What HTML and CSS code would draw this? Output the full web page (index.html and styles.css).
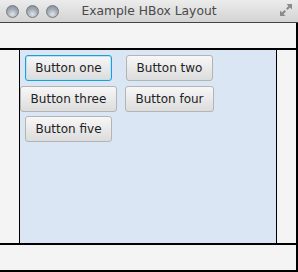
FILE: index.html
```html
<!DOCTYPE html>
<html>
<head>
<meta charset="utf-8">
<link rel="stylesheet" href="styles.css">
</head>
<body>
<div class="window">
  <div class="titlebar">
    <div class="lights">
      <span class="light"></span>
      <span class="light"></span>
      <span class="light"></span>
    </div>
    <div class="title">Example HBox Layout</div>
    <svg class="fullscreen" width="14" height="14" viewBox="0 0 14 14">
      <polygon points="13,1 13,6.5 11,4.5 8.5,7 7,5.5 9.5,3 7.5,1" fill="#8a8a8a"/>
      <polygon points="1,13 1,7.5 3,9.5 5.5,7 7,8.5 4.5,11 6.5,13" fill="#8a8a8a"/>
    </svg>
  </div>
  <div class="content">
    <div class="band">
      <div class="pane">
        <div class="tiles">
          <button class="btn focused">Button one</button>
          <button class="btn">Button two</button>
          <button class="btn">Button three</button>
          <button class="btn">Button four</button>
          <button class="btn">Button five</button>
        </div>
      </div>
    </div>
  </div>
</div>
</body>
</html>
```

FILE: styles.css
```css
html, body {
  margin: 0;
  padding: 0;
  background: #f4f4f4;
}
.window {
  width: 298px;
  height: 272px;
  display: flex;
  flex-direction: column;
  overflow: hidden;
}
.titlebar {
  height: 22px;
  flex: none;
  border-bottom: 1px solid #444;
  background: linear-gradient(#ececec, #d3d3d3);
  display: flex;
  align-items: center;
  position: relative;
}
.lights {
  display: flex;
  gap: 7px;
  padding-left: 6px;
}
.light {
  width: 11px;
  height: 11px;
  border-radius: 50%;
  border: 1px solid #737b84;
  background: radial-gradient(circle at 50% 75%, #e2e6ea 0%, #aab2bb 45%, #7b8590 100%);
}
.title {
  position: absolute;
  left: 0;
  right: 0;
  top: 4px;
  text-align: center;
  font-family: "DejaVu Sans", sans-serif;
  font-size: 12.3px;
  color: #4a4a4a;
}
.fullscreen {
  position: absolute;
  right: 5px;
  top: 3px;
}
.content {
  flex: 1;
  border-right: 2px solid #000;
  border-bottom: 2px solid #000;
  padding-top: 25px;
  display: flex;
  flex-direction: column;
}
.band {
  border-top: 2px solid #000;
  border-bottom: 2px solid #000;
  height: 193px;
  display: flex;
}
.pane {
  margin-left: 19px;
  width: 256px;
  border-left: 1px solid #000;
  border-right: 1px solid #000;
  background: #dae6f3;
}
.tiles {
  display: grid;
  grid-template-columns: 97px 97px;
  column-gap: 4px;
  row-gap: 4.5px;
  justify-items: center;
  padding: 5px 0 0 0;
}
.btn {
  height: 26px;
  padding: 0 9.5px;
  margin: 0;
  white-space: nowrap;
  border: 1px solid #b4b4b4;
  border-radius: 3px;
  background: linear-gradient(#f7f7f7, #dcdcdc);
  font-family: "DejaVu Sans", sans-serif;
  font-size: 12px;
  color: #222;
  line-height: 24px;
}
.btn.focused {
  border-color: #1a9fd8;
  box-shadow: inset 0 0 0 1px #bfe1f2;
}
```
